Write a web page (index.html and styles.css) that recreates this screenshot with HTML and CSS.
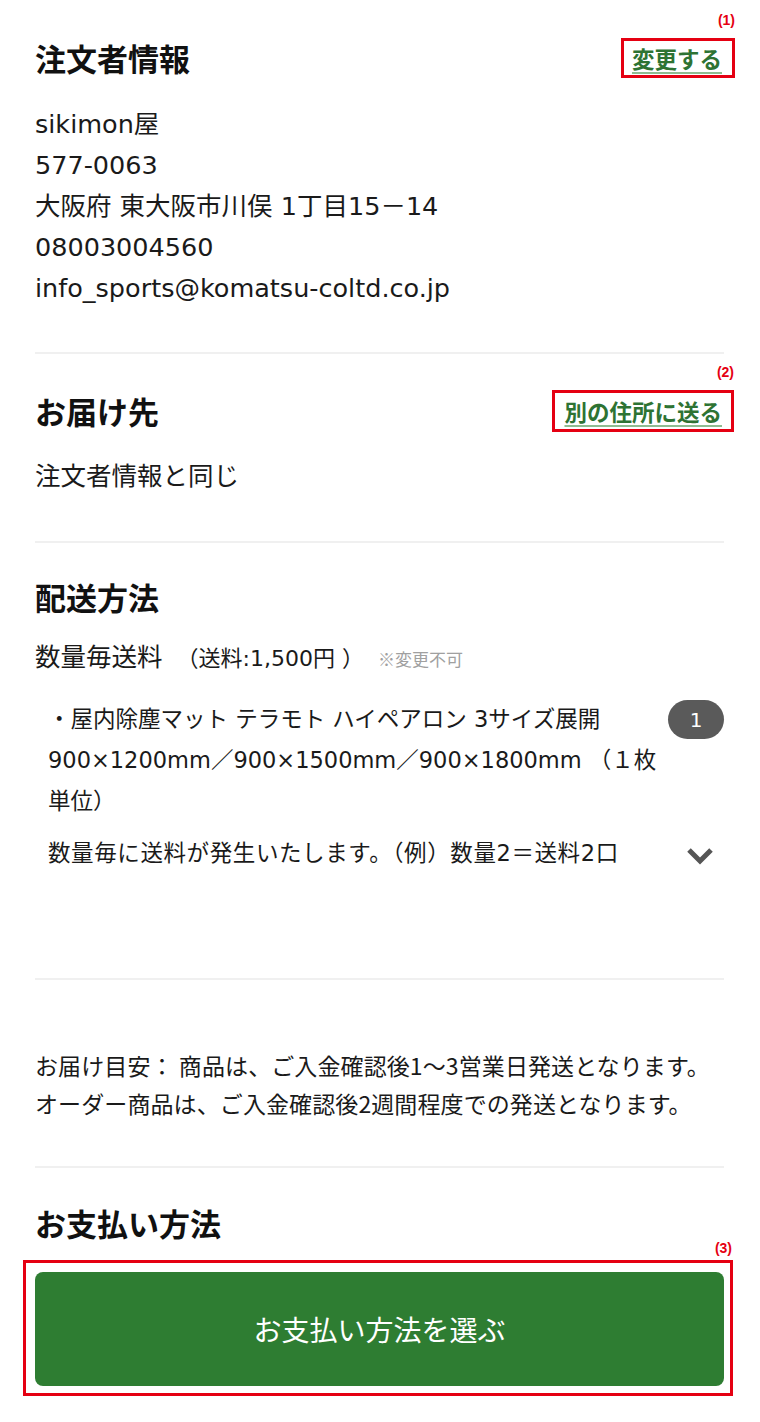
FILE: index.html
```html
<!DOCTYPE html>
<html lang="ja">
<head>
<meta charset="utf-8">
<title>注文確認</title>
<link rel="stylesheet" href="styles.css">
</head>
<body>
<main class="page">
  <section class="sec sec-orderer">
    <div class="sec-head">
      <h2 class="sec-title">注文者情報</h2>
      <span class="mark mark-1"><span class="mark-label">(1)</span><a class="link" href="#">変更する</a></span>
    </div>
    <div class="info">
      <p>sikimon屋</p>
      <p>577-0063</p>
      <p>大阪府 東大阪市川俣 1丁目15－14</p>
      <p>08003004560</p>
      <p>info_sports@komatsu-coltd.co.jp</p>
    </div>
  </section>

  <section class="sec sec-dest">
    <div class="sec-head">
      <h2 class="sec-title">お届け先</h2>
      <span class="mark mark-2"><span class="mark-label">(2)</span><a class="link" href="#">別の住所に送る</a></span>
    </div>
    <div class="info">
      <p>注文者情報と同じ</p>
    </div>
  </section>

  <section class="sec sec-ship">
    <h2 class="sec-title">配送方法</h2>
    <p class="ship-type">数量毎送料<span class="fee">（送料:1,500円 ）</span><span class="fixed">※変更不可</span></p>
    <div class="item">
      <div class="item-name">
        <span class="ln">・屋内除塵マット テラモト ハイペアロン 3サイズ展開</span>
        <span class="ln">900×1200mm／900×1500mm／900×1800mm （１枚</span>
        <span class="ln">単位）</span>
      </div>
      <span class="qty">1</span>
    </div>
    <div class="note-row">
      <p class="note">数量毎に送料が発生いたします。（例）数量2＝送料2口</p>
      <svg class="chev" width="28" height="20" viewBox="0 0 28 20" aria-hidden="true"><polyline points="3,4 14,15 25,4" fill="none" stroke="#555" stroke-width="5"/></svg>
    </div>
  </section>

  <section class="sec sec-eta">
    <p>お届け目安： 商品は、ご入金確認後1～3営業日発送となります。</p>
    <p>オーダー商品は、ご入金確認後2週間程度での発送となります。</p>
  </section>

  <section class="sec sec-pay">
    <h2 class="sec-title">お支払い方法</h2>
    <div class="pay-frame"><span class="mark-label">(3)</span><button class="pay-btn" type="button">お支払い方法を選ぶ</button></div>
  </section>
</main>
</body>
</html>
```

FILE: styles.css
```css
* { box-sizing: border-box; }
html, body { margin: 0; padding: 0; background: #fff; }
body {
  font-family: "DejaVu Sans", "Noto Sans CJK JP", sans-serif;
  color: #1a1a1a;
  font-size: 25.5px;
}
.page { padding: 0 36px 0 35px; }
p { margin: 0; }

.sec { border-bottom: 2px solid #f0f0f0; }
.sec:last-child { border-bottom: none; }

.sec-head {
  display: flex;
  justify-content: space-between;
  align-items: center;
}
.sec-title {
  margin: 0;
  font-family: "Noto Sans CJK JP", sans-serif;
  font-size: 31px;
  font-weight: 700;
  line-height: 43px;
  color: #111;
}

.link {
  font-family: "Noto Sans CJK JP", sans-serif;
  font-size: 22.5px;
  font-weight: 700;
  line-height: 34px;
  color: #2e7333;
  text-decoration: underline;
  text-decoration-color: #8fbc92;
  text-decoration-thickness: 2px;
  text-underline-offset: 4px;
  display: inline-block;
}

.mark { position: relative; display: inline-block; }
.mark::before {
  content: "";
  position: absolute;
  border: 3px solid #e50012;
  pointer-events: none;
}
.mark-label {
  position: absolute;
  right: 0;
  font-family: "Liberation Sans", sans-serif;
  font-weight: 700;
  font-size: 14px;
  line-height: 15px;
  color: #e50012;
}
.mark-1 { margin-right: 2px; }
.mark-1::before { left: -11px; right: -13px; top: -3px; bottom: -3px; }
.mark-1 .mark-label { top: -28px; right: -13px; }
.mark-2 { margin-right: 2px; }
.mark-2::before { left: -12px; right: -12px; top: -4px; bottom: -4px; }
.mark-2 .mark-label { top: -29px; right: -12px; }

.pay-frame {
  position: relative;
  margin: 16px -9px 0 -12px;
  border: 3px solid #e50012;
  padding: 9px 6px 7px 9px;
}
.pay-frame .mark-label { top: -22px; right: -2px; }

.info p { line-height: 41px; }

.sec-orderer { padding: 36px 0 43px; }
.sec-orderer .info { margin-top: 25px; }

.sec-dest { padding: 35px 0 47px; }
.sec-dest .info { margin-top: 21px; font-family: "Noto Sans CJK JP", sans-serif; }

.sec-ship { padding: 32px 0 104px; }
.ship-type {
  margin-top: 16px;
  line-height: 41px;
  font-family: "Noto Sans CJK JP", sans-serif;
}
.ship-type .fee {
  font-family: "DejaVu Sans", "Noto Sans CJK JP", sans-serif;
  font-size: 22px;
  margin-left: 14px;
}
.ship-type .fixed {
  font-family: "Noto Sans CJK JP", sans-serif;
  font-size: 17px;
  color: #a0a0a0;
  margin-left: 14px;
}

.item {
  display: flex;
  align-items: flex-start;
  gap: 8px;
  margin-top: 20px;
  padding-left: 13px;
  font-size: 22.5px;
}
.item-name { flex: 1; min-width: 0; }
.item-name .ln { display: block; white-space: nowrap; line-height: 41px; }
.qty {
  flex-shrink: 0;
  width: 56px;
  height: 39px;
  margin-top: 1px;
  border-radius: 20px;
  background: #5a5a5a;
  color: #fff;
  font-size: 20px;
  display: flex;
  align-items: center;
  justify-content: center;
}

.note-row {
  display: flex;
  justify-content: space-between;
  align-items: center;
  margin-top: 11px;
  padding-left: 13px;
  padding-right: 10px;
}
.note { font-size: 22.5px; line-height: 41px; letter-spacing: 0.6px; }
.chev { display: block; margin-top: 4px; }

.sec-eta {
  padding: 66px 0 44px;
  font-family: "Noto Sans CJK JP", sans-serif;
  font-size: 23px;
  letter-spacing: 0.1px;
}
.sec-eta p { line-height: 38px; }

.sec-pay { padding: 33px 0 0; }
.pay-btn {
  display: block;
  width: 100%;
  height: 114px;
  border: none;
  border-radius: 8px;
  background: #2e7d32;
  color: #fff;
  font-family: "Noto Sans CJK JP", sans-serif;
  font-size: 28px;
  cursor: pointer;
}
```
